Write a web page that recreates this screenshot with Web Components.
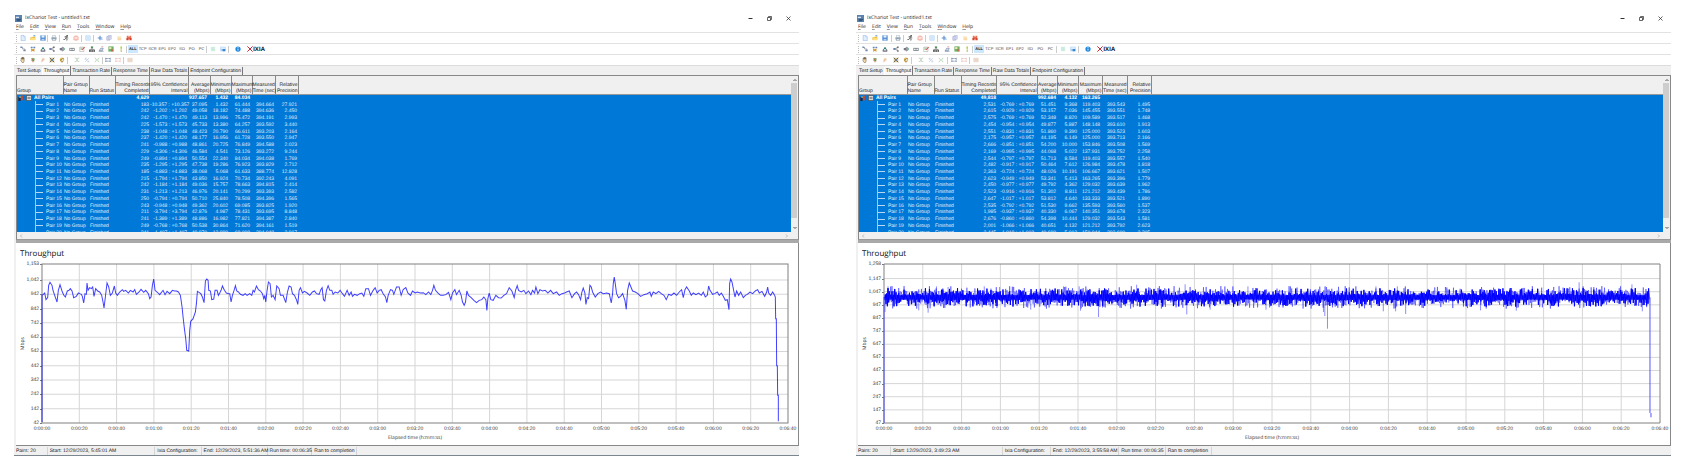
<!DOCTYPE html>
<html lang="en">
<head>
<meta charset="utf-8">
<title>IxChariot Test</title>
<style>
body {
    margin: 0;
    padding: 14px 17px 14px 14px;
    background: #fff;
    color: #333;
    font: 5px/6px "Liberation Sans", Arial, sans-serif;
    text-rendering: geometricPrecision;
    display: grid;
    grid-template-columns: 785fr 815fr;
    gap: 57px;
    align-items: start;
}
</style>
</head>
<body>
<chariot-window heading="IxChariot Test - untitled1.txt">
    <pair-table run="left"></pair-table>
    <throughput-chart run="left"></throughput-chart>
    <status-bar slot="status">
        <span>Pairs: 20</span>
        <span>Start: 12/29/2023, 5:45:01 AM</span>
        <span>Ixia Configuration:</span>
        <span>End: 12/29/2023, 5:51:36 AM</span>
        <span>Run time: 00:06:35</span>
        <span>Ran to completion</span>
    </status-bar>
</chariot-window>
<chariot-window heading="IxChariot Test - untitled1.txt">
    <pair-table run="right"></pair-table>
    <throughput-chart run="right"></throughput-chart>
    <status-bar slot="status">
        <span>Pairs: 20</span>
        <span>Start: 12/29/2023, 3:49:23 AM</span>
        <span>Ixia Configuration:</span>
        <span>End: 12/29/2023, 3:55:58 AM</span>
        <span>Run time: 00:06:35</span>
        <span>Ran to completion</span>
    </status-bar>
</chariot-window>

<script>
"use strict";

// icons on a 16x16 grid
const ICONS = {
    app: '<rect width="16" height="16" fill="#5b83ad"/><path d="M2 4h7v3H2z" fill="#dbe8f5"/><path d="M4 10h10M4 13h8" stroke="#26476b" stroke-width="2"/>',
    page: '<path d="M3 1h7l4 4v10H3z" fill="#e2efff" stroke="#8fb5e3" stroke-width="1.5"/><path d="M10 1v4h4" fill="none" stroke="#8fb5e3"/>',
    open: '<path d="M1 6h5l2-2h6v9H1z" fill="#f0c24a"/><path d="M1 14l3-6h12l-3 6z" fill="#ffdf7e"/><path d="M9 1l4 0 0 3" stroke="#4a8be0" stroke-width="2" fill="none"/>',
    save: '<path d="M1 1h14v14H1z" fill="#4286d6"/><path d="M4 1h8v6H4z" fill="#e9f2fc"/><path d="M4 10h8v5H4z" fill="#b7cfe9"/>',
    print: '<path d="M4 1h8v5H4z" fill="#fff" stroke="#7c93a8"/><path d="M1 6h14v6H1z" fill="#9aabba"/><path d="M4 10h8v5H4z" fill="#eef3f7" stroke="#5c7286"/>',
    run: '<circle cx="11" cy="2.500" r="2.200" fill="#333"/><path d="M4 5l5-1-2 5 4 2-1 4M7 9l-2 3H1M9 5l2 3h3" fill="none" stroke="#333" stroke-width="1.800"/>',
    stop: '<path d="M5 1h6l4 4v6l-4 4H5l-4-4V5z" fill="#f8b9ae"/><path d="M4 8h8" stroke="#fff" stroke-width="3"/>',
    poll: '<path d="M2 2h12v12H2z" fill="#e4f1fc" stroke="#a5cdf0" stroke-width="1.500"/><path d="M5 6h6M5 10h6" stroke="#a5cdf0"/>',
    add: '<path d="M8 2v12M2 8h12" stroke="#5a8fd0" stroke-width="3"/><path d="M10 11l3 3 3-3" fill="#7eaee8"/>',
    copy: '<path d="M2 4h8v10H2z" fill="#dcdff5" stroke="#7780bd"/><path d="M6 1h8v10H6z" fill="#eceefb" stroke="#7780bd"/><path d="M8 4h4M8 7h4" stroke="#7780bd"/>',
    paste: '<path d="M3 3h10v11H3z" fill="#fdebc7"/><path d="M5 7h9v7H5z" fill="#fbd8a8"/>',
    remove: '<path d="M2 2h5v6H2zM9 2h5v6H9z" fill="#e9744f"/><path d="M1 8h6v6H1zM9 8h6v6H9z" fill="#d9402f"/><path d="M5 6h6v4H5z" fill="#e2593f"/>',
    pair: '<path d="M3 4h4v4h6v5" fill="none" stroke="#667" stroke-width="1.500"/><path d="M1 1h5v4H1zM9 10h6v4H9z" fill="#6f8cb3"/>',
    multi: '<path d="M2 2h5v4H2zM9 2h5v4H9z" fill="#6688bb"/><path d="M3 8l9 6M12 8l-9 6" stroke="#cc9a35" stroke-width="3"/>',
    voip: '<path d="M3 13c0-9 10-9 10 0" fill="none" stroke="#3d4a55" stroke-width="2"/><circle cx="8" cy="6" r="3" fill="#2d8277"/><path d="M2 12h12v3H2z" fill="#556"/>',
    multicast: '<path d="M4 8l9-5M4 8h9M4 8l9 5" stroke="#555" stroke-width="1.300"/><circle cx="3" cy="8" r="2.500" fill="#5573a8"/><path d="M11 1h4v4h-4zM11 11h4v4h-4z" fill="#666"/>',
    speaker: '<path d="M2 5h4l4-4v14l-4-4H2z" fill="#778"/><path d="M12 3v10M15 5v6" stroke="#4f9e75" stroke-width="2"/>',
    video: '<path d="M1 5h14v8H1z" fill="#737b83"/><circle cx="5" cy="9" r="2.200" fill="#fff"/><circle cx="11" cy="9" r="2.200" fill="#fff"/>',
    edit: '<path d="M2 3h11v12H2z" fill="#fff" stroke="#777"/><path d="M4 6h6M4 9h4" stroke="#45a071" stroke-width="1.500"/><path d="M7 10l7-8 2 2-7 7z" fill="#d0553f"/>',
    group: '<path d="M8 5v4M2 13V9h12v4" fill="none" stroke="#444" stroke-width="1.500"/><path d="M5 1h6v5H5z" fill="#588d65"/><path d="M0 11h5v4H0zM6 11h5v4H6zM12 11h4v4h-4z" fill="#444"/>',
    chart: '<path d="M2 14h13M3 13l4-7h7l-3 7z" fill="#d8dde8" stroke="#667aa0" stroke-width="1.500"/><path d="M9 2h5" stroke="#d88" stroke-width="2"/>',
    image: '<path d="M1 1h14v14H1z" fill="#71b06b"/><path d="M3 3h6v5H3z" fill="#f4e8b0"/><path d="M8 9h6v5H8z" fill="#d9634c"/>',
    warn: '<path d="M6 1h5l-1 9H7z" fill="#bad04f"/><circle cx="8.500" cy="13" r="2" fill="#93a92f"/>',
    ruler: '<path d="M2 2h12v12H2z" fill="#d8f1e8"/><path d="M4 5h8M4 8h8M4 11h8" stroke="#a5ddca"/>',
    panes: '<path d="M1 2h14v12H1z" fill="#a7cff4"/><path d="M3 4h10v3H3z" fill="#fff"/><path d="M7 8h7v6H7z" fill="#3886d0"/>',
    info: '<circle cx="8" cy="8" r="7" fill="#2089df"/><path d="M8 7v5M8 3v2.500" stroke="#fff" stroke-width="2.200"/>',
    hand: '<path d="M3 7V3h2v3V1h2v5V1h2v5l0-4h2v9l-2 4H6L2 9z" fill="#f6d9a7" stroke="#574a36" stroke-width="1.200"/>',
    flag: '<path d="M3 8l4-6 6 2-2 7H5z" fill="#7fae6d"/><path d="M4 3l7 8M8 14v-4" stroke="#d04e3c" stroke-width="2"/>',
    pale: '<path d="M3 8l4-6 6 2-2 7H5z" fill="#f7dcb5"/><path d="M4 14l5-9" stroke="#dfa6a0" stroke-width="2"/>',
    cross: '<path d="M2 2h12v12H2z" fill="#dbc98f"/><path d="M2 2l12 12M14 2L2 14" stroke="#444" stroke-width="2"/><path d="M5 6h6v4H5z" fill="#6d86b3"/>',
    gear: '<circle cx="8" cy="7" r="6" fill="#e8b94d"/><path d="M3 9l9-5M8 15v-5" stroke="#665" stroke-width="2"/><circle cx="9" cy="8" r="2" fill="#fff"/>',
    gridA: '<path d="M2 3h4l4 9h4M14 3h-4L6 12H2" fill="none" stroke="#b3c8b2" stroke-width="2"/>',
    gridB: '<path d="M2 2h5v5H2zM9 9h5v5H9z" fill="#ccd9ea"/><path d="M3 13l10-10" stroke="#b9c6d8" stroke-width="2"/>',
    gridC: '<path d="M2 3l12 10M14 3L2 13" stroke="#a9d0ab" stroke-width="2.500"/><path d="M6 5h4v6H6z" fill="#d8ead8"/>',
    range: '<path d="M2 2v12M14 2v12M2 4h12M2 11h12" fill="none" stroke="#56749d" stroke-width="2" stroke-dasharray="3 1"/>',
    rangeB: '<path d="M2 2v12M14 2v12M2 4h12M2 11h12" fill="none" stroke="#e5b3ad" stroke-width="2" stroke-dasharray="3 1"/>',
    box: '<path d="M2 3h12v10H2z" fill="#f1dfd0" stroke="#ddc0b0"/><path d="M4 8h8" stroke="#cdb5ad"/>',
};

const icon = name => `<svg viewBox="0 0 16 16" aria-hidden="true">${ICONS[name]}</svg>`;

// one string per toolbar: | separator, = wide separator, "quoted" text button
const TOOLBARS = [
    'page open save | print | run stop | poll | add copy paste remove',
    'pair multi voip multicast speaker video edit group chart image warn | "ALL" "TCP" "SCR" "EP1" "EP2" "SO" "PO" "PC" | ruler panes = info',
    'hand flag pale cross gear = gridA gridB gridC | range rangeB | box',
];

// rows: records, confidence, average, minimum, maximum, time, precision
const RUNS = {
    left: {
        columns: [[46, 0], [26, 0], [26, 0], [34, 0], [39, 1], [22, 3], [21, 3], [21, 2], [23, 1], [23, 1]],
        total: ['4,629', '', '937.657', '1.432', '84.034', '', ''],
        rows: `183 10.357 37.095 1.432 61.444 394.664 27.921
242 1.202 49.058 18.182 74.488 394.636 2.450
242 1.470 49.113 13.996 75.472 394.191 2.993
225 1.573 45.733 13.380 64.257 393.592 3.440
238 1.048 48.423 20.790 66.611 393.203 2.164
237 1.420 48.177 16.956 61.728 393.550 2.947
241 0.988 48.861 20.725 76.849 394.588 2.023
229 4.306 46.584 4.541 73.126 393.272 9.244
249 0.894 50.554 22.340 84.034 394.038 1.769
235 1.295 47.738 19.286 76.923 393.829 2.712
185 4.883 38.068 5.068 61.633 388.774 12.828
215 1.794 43.850 16.924 70.734 392.243 4.091
242 1.184 49.036 15.757 78.663 394.815 2.414
231 1.213 46.976 20.141 70.299 393.393 2.582
250 0.794 50.710 25.840 78.508 394.396 1.565
243 0.948 49.362 20.602 69.085 393.825 1.920
211 3.794 42.876 4.987 78.431 393.695 8.848
241 1.389 48.886 16.982 77.821 394.387 2.840
249 0.768 50.538 30.864 71.620 394.161 1.519
241 1.407 48.870 13.889 68.098 394.048 2.917`,
        max: 1153, min: 42, width: 2237
    },
    right: {
        columns: [[48, 0], [27, 0], [27, 0], [35, 0], [41, 3], [20, 1], [21, 1], [24, 2], [25, 2], [24, 1]],
        total: ['49,818', '', '992.684', '4.132', '163.265', '', ''],
        rows: `2,531 0.769 51.451 9.368 119.403 393.543 1.495
2,615 0.929 53.157 7.036 145.455 393.551 1.748
2,575 0.769 52.348 8.820 109.589 393.517 1.468
2,454 0.954 49.877 5.887 148.148 393.610 1.913
2,551 0.831 51.860 9.390 125.000 393.523 1.603
2,175 0.957 44.195 6.149 125.000 393.713 2.166
2,666 0.851 54.200 10.000 153.846 393.508 1.569
2,169 0.995 44.068 5.022 137.931 393.752 2.258
2,544 0.797 51.713 8.584 119.403 393.557 1.540
2,482 0.917 50.464 7.612 126.984 393.478 1.818
2,363 0.724 48.026 10.191 106.667 393.621 1.507
2,623 0.949 53.341 5.413 163.265 393.396 1.779
2,450 0.977 49.792 4.362 129.032 393.639 1.962
2,523 0.916 51.302 8.811 121.212 393.439 1.786
2,647 1.017 53.812 4.640 133.333 393.521 1.890
2,535 0.792 51.530 9.662 135.593 393.560 1.537
1,985 0.937 40.330 6.067 140.351 393.678 2.323
2,676 0.860 54.398 10.444 129.032 393.543 1.581
2,001 1.066 40.651 4.132 121.212 393.792 2.623
2,445 1.018 49.699 5.012 150.944 393.600 2.205`,
        max: 1258, min: 47, width: 2322
    }
};

// throughput samples of the left run, x,y in plot units with y counted down
const SAMPLES = `0,474 0,94 4,91 8,87 12,107 17,101 20,64 24,55 30,64 33,79 39,97 45,114 49,79 54,62 60,81 65,93 70,99 76,81 81,79 85,74 90,81 95,101 103,97 109,87 113,89 118,91 121,97 125,117 129,89 133,91 135,57 138,79 143,71 148,74 152,69 156,97 161,74 167,81 173,84 179,94 183,114 186,132 190,99 195,57 200,69 205,94 211,87 217,66 221,87 226,94 233,84 241,77 245,82 251,79 259,87 265,79 273,84 278,77 283,91 291,84 297,76 305,85 311,79 319,89 323,104 327,99 331,64 335,45 339,79 345,84 353,92 359,84 363,79 369,92 375,82 383,89 391,79 397,81 403,81 409,84 415,94 420,129 423,159 427,194 431,224 434,259 440,261 443,199 446,172 453,164 460,144 463,119 466,82 471,85 476,89 481,99 486,116 490,51 494,45 498,49 500,79 505,81 509,107 515,105 519,79 525,79 529,94 533,87 537,79 541,66 547,79 553,87 559,89 563,89 567,114 571,94 576,79 580,65 584,81 589,84 595,91 603,94 609,89 615,94 623,89 629,94 633,79 637,84 643,66 649,77 655,81 661,89 665,104 668,94 671,114 675,79 679,54 684,59 688,99 693,94 699,107 704,66 711,74 715,94 723,94 731,116 736,84 741,66 747,69 751,89 757,94 763,107 767,121 771,79 775,71 781,87 787,82 795,87 803,94 811,84 817,81 823,89 831,91 836,77 840,71 844,107 848,111 853,79 858,65 863,79 869,79 873,91 879,84 887,87 894,79 901,89 907,97 915,79 921,94 927,84 931,97 937,91 945,94 953,89 959,87 965,97 971,74 979,74 985,94 993,79 999,71 1005,87 1011,79 1017,77 1023,89 1030,99 1034,116 1038,94 1045,77 1051,79 1055,91 1063,69 1071,69 1077,94 1083,77 1091,71 1097,87 1105,94 1111,81 1119,87 1125,84 1135,87 1143,86 1151,92 1159,84 1166,92 1171,79 1175,64 1180,79 1186,86 1195,94 1203,94 1211,92 1219,85 1226,107 1231,87 1238,77 1243,92 1251,79 1257,94 1261,114 1266,124 1270,114 1274,81 1279,94 1287,101 1295,109 1303,116 1311,109 1319,107 1325,99 1331,107 1334,139 1337,104 1341,87 1346,107 1353,109 1361,94 1369,101 1377,102 1385,94 1393,89 1401,71 1409,81 1416,101 1420,79 1425,65 1429,79 1437,84 1445,79 1451,89 1459,81 1466,92 1471,79 1477,87 1481,69 1487,89 1493,77 1501,81 1509,79 1517,87 1525,79 1533,89 1543,84 1551,94 1559,89 1567,87 1573,84 1581,81 1589,101 1597,89 1603,84 1609,92 1615,107 1619,84 1623,72 1628,87 1631,121 1635,101 1639,104 1643,64 1647,69 1651,84 1659,99 1667,89 1675,84 1683,89 1693,87 1701,89 1707,117 1711,89 1713,59 1716,39 1719,59 1723,89 1729,101 1735,97 1741,89 1748,109 1752,136 1756,79 1761,57 1766,69 1771,81 1779,84 1787,89 1795,97 1805,92 1815,89 1823,84 1827,97 1833,84 1841,89 1849,82 1857,89 1865,94 1872,107 1879,91 1887,94 1895,87 1903,94 1911,84 1918,77 1923,101 1928,77 1933,69 1941,81 1947,94 1953,87 1961,92 1969,87 1977,94 1983,84 1989,99 1995,94 1999,66 2003,79 2011,91 2017,89 2025,84 2031,94 2037,87 2043,97 2049,109 2055,107 2060,137 2062,59 2065,45 2069,54 2073,74 2078,99 2083,81 2089,94 2095,84 2103,101 2109,94 2115,91 2123,84 2131,89 2139,81 2146,77 2151,87 2159,82 2167,97 2173,84 2176,69 2179,87 2185,94 2191,84 2196,92 2199,99 2200,164 2202,164 2203,305 2205,305 2206,394 2208,394 2208,472`;

// tallest excursions of the right run: x, y in the same units
const SPIKES = [[3, 144], [12, 67], [104, 139], [132, 146], [157, 67], [192, 69], [300, 67], [346, 69], [439, 137], [537, 67], [584, 67], [588, 140],
    [642, 159], [756, 62], [901, 61], [906, 151], [976, 137], [1089, 67], [1143, 137], [1315, 144], [1319, 156], [1327, 194], [1472, 67], [1494, 142],
    [1531, 142], [1536, 67], [1561, 150], [1785, 139], [1892, 140], [2080, 55], [2238, 61], [2269, 142]];

function bandPath(lift, spread, seed)
{
    let random = () => (seed = seed*16807 % 2147483647) / 2147483647;
    let d = 'M1 100';
    for (let i = 2; i < 2292; i += 2)
    {
        let side = i%4 ? 1 : -1;
        d += `L${i} ${(100 + side*(lift + spread*random()**2)).toFixed(1)}`;
    }
    return d;
}

function make(name, css, build)
{
    customElements.define(name, class extends HTMLElement {
        connectedCallback() {
            if (this.shadowRoot) return;
            const template = document.createElement('template');
            template.innerHTML = `<style>* { box-sizing: border-box; } ${css}</style>${build(this)}`;
            this.attachShadow({ mode: 'open' }).appendChild(template.content.cloneNode(true));
        }
    });
}

make('menu-bar', `
    :host { display: block; font-family: "Open Sans", sans-serif; color: #222; }
    nav { display: flex; gap: 6px; height: 10px; padding: 0 2px; align-items: center; }
    button { border: 0; padding: 0; background: none; font: inherit; color: inherit; text-rendering: inherit; }
    u { text-underline-offset: 1px; text-decoration-thickness: 1px; text-decoration-color: #999; }
`, () => `<nav>${['File', 'Edit', 'View', 'Run', 'Tools', 'Window', 'Help'].map(s =>
    `<button><u>${s[0]}</u>${s.slice(1)}</button>`).join('')}</nav>`);

make('tool-bar', `
    :host { display: block; background: #fff; border-top: 1px solid #e2e2e2; }
    div { display: flex; align-items: center; height: 10px; }
    button { flex: none; width: 1.25%; height: 8px; padding: 0; border: 0; background: none; display: flex; align-items: center; justify-content: center;
        font: 4px/8px "Liberation Sans", sans-serif; color: #444; text-rendering: inherit; }
    button.on { background: #cce8ff; color: #222; font-weight: bold; }
    svg { width: 6px; height: 6px; flex: none; }
    i { flex: none; width: 2px; height: 7px; border-left: 1px solid #ccc; }
    i.wide { width: 5px; }
    i.grip { width: 2px; margin-left: 2px; border-left: 1px dotted #bbb; }
    .logo { gap: 0; height: 8px; margin-left: 4px; font: bold 6px/8px "Open Sans", sans-serif; color: #222; }
`, el => {
    const row = +el.getAttribute('row');
    const items = TOOLBARS[row].split(' ').map(s =>
        s == '|' ? '<i></i>' :
        s == '=' ? '<i class="wide"></i>' :
        s[0] == '"' ? `<button${s == '"ALL"' ? ' class="on"' : ''}>${s.slice(1, -1)}</button>` :
        `<button aria-label="${s}">${icon(s)}</button>`);
    const logo = row == 1 ? `<div class="logo"><svg viewBox="0 0 16 16" aria-hidden="true"><path d="M1 1l14 14M15 1L1 15" stroke="#c8202e" stroke-width="2.500"/></svg>IXIA</div>` : '';
    return `<div role="toolbar"><i class="grip"></i>${items.join('')}${logo}</div>`;
});

make('tab-strip', `
    :host { display: block; background: #f0f0f0; border-top: 1px solid #dcdcdc; color: #222; }
    div { display: flex; height: 9px; align-items: flex-end; }
    button { height: 8px; padding: 0 1px; border: 0; border-right: 1px solid #777; background: none; font: inherit; line-height: 8px; color: inherit; text-rendering: inherit; }
    button:first-child { border-color: #fff; padding-left: 3px; }
    button.on { height: 9px; background: #f8f8f8; }
`, () => `<div role="tablist">${['Test Setup', 'Throughput', 'Transaction Rate', 'Response Time', 'Raw Data Totals', 'Endpoint Configuration'].map((s, i) =>
    `<button role="tab"${i == 1 ? ' class="on" aria-selected="true"' : ''}>${s}</button>`).join('')}</div>`);

make('pair-table', `
    :host { display: block; border: 1px solid #888; border-bottom-color: #999; background: #f0f0f0; }
    .view { display: grid; grid-template-columns: 1fr 7px; }
    .rows { height: 156px; overflow: hidden; background: #0078d7; }
    table { width: 100%; height: 160px; table-layout: fixed; border-collapse: collapse; color: #e4f1fc; }
    th, td { padding: 0 1px; overflow: visible; white-space: nowrap; text-align: left; font-weight: inherit; }
    thead tr { height: 18px; }
    thead th { padding: 0; background: #f0f0f0; color: #222; vertical-align: bottom; border-right: 1px solid #888; border-bottom: 1px solid #999; }
    thead th:last-child { border-right: 0; }
    .n { text-align: right; }
    .total { font-weight: bold; color: #fff; }
    .name { padding-left: 29px; background: linear-gradient(#9fcbf0 0 0) 18px 0/1px 100% no-repeat, linear-gradient(#b5d7f4 0 0) 18px 50%/8px 1px no-repeat; }
    .all { display: flex; align-items: center; gap: 2px; }
    .all svg { width: 6px; height: 6px; }
    .bar { display: flex; flex-direction: column; justify-content: space-between; align-items: center; padding: 2px 0; }
    .bar.down { background: linear-gradient(#cdcdcd 0 0) 0 7px/6px 135px no-repeat; }
    .bar.side { flex-direction: row; height: 7px; padding: 0 9px 0 2px; }
    .bar svg { width: 4px; height: 4px; fill: none; stroke: #555; stroke-width: 2; }
    .bar.side svg { stroke: #bbb; }
`, el => {
    const run = RUNS[el.getAttribute('run')];
    const heads = ['Group', 'Pair Group<br>Name', 'Run Status', 'Timing Records<br>Completed', '95% Confidence<br>Interval',
        'Average<br>(Mbps)', 'Minimum<br>(Mbps)', 'Maximum<br>(Mbps)', 'Measured<br>Time (sec)', 'Relative<br>Precision'];
    const cells = list => list.map((s, i) => `<td class="n" style="padding-right:${run.columns[i + 3][1]}px">${s}</td>`).join('') + '<td></td>';
    const rows = run.rows.split('\n').map((line, i) => {
        let v = line.split(' ');
        v[1] = `-${v[1]} : +${v[1]}`;
        return `<tr><td class="name">Pair ${i + 1}</td><td>No Group</td><td>Finished</td>${cells(v)}</tr>`;
    });
    return `
    <div class="view">
        <div class="rows"><table>
            <colgroup>${run.columns.map(c => `<col style="width:${c[0]}px">`).join('')}<col></colgroup>
            <thead><tr>${heads.map((s, i) => `<th${i > 2 ? ' class="n"' : ''}>${s}</th>`).join('')}<th></th></tr></thead>
            <tbody>
                <tr class="total"><td><div class="all">
                    <svg viewBox="0 0 16 16" aria-hidden="true"><path d="M1 6h6v10H1z" fill="#331d24"/><path d="M8 1h5v13H8z" fill="#c84636"/><path d="M4 3h3v5H4z" fill="#e7b55b"/></svg>
                    <svg viewBox="0 0 16 16" aria-hidden="true"><path d="M1 1h14v14H1z" fill="#d8d8d8" stroke="#444" stroke-width="2"/><path d="M4 8h8" stroke="#222" stroke-width="2"/></svg>
                    <span>All Pairs</span></div></td><td></td><td></td>${cells(run.total)}</tr>
                ${rows.join('')}
            </tbody>
        </table></div>
        <div class="bar down"><svg viewBox="0 0 8 8"><path d="M1 6l3-3 3 3"/></svg><svg viewBox="0 0 8 8"><path d="M1 2l3 3 3-3"/></svg></div>
    </div>
    <div class="bar side"><svg viewBox="0 0 8 8"><path d="M6 1L3 4l3 3"/></svg><svg viewBox="0 0 8 8"><path d="M2 1l3 3-3 3"/></svg></div>`;
});

make('throughput-chart', `
    :host { display: block; background: #fff; border: 1px solid #888; border-width: 0 1px 1px 0; padding: 5px 10px 3px 4px; color: #333; }
    h2 { margin: 0 0 4px; font: 8px/12px "Open Sans", sans-serif; color: #111; }
    .plot { display: grid; grid-template-columns: 5px 15px 2px 1fr; grid-template-rows: 159px 10px 9px; }
    .unit { writing-mode: vertical-rl; transform: rotate(180deg); justify-self: center; align-self: center; font-family: "Open Sans", sans-serif; }
    .y { display: grid; text-align: right; padding-right: 1px; }
    .y span { height: 0; line-height: 0; }
    .ticks { display: grid; }
    .ticks span { height: 1px; background: #777; }
    .x { grid-column: 4; display: flex; justify-content: space-between; padding-top: 3px; }
    .x span { width: 0; display: flex; justify-content: center; white-space: nowrap; }
    .time { grid-column: 4; text-align: center; line-height: 10px; font-family: "Open Sans", sans-serif; }
    svg { display: block; width: 100%; height: 159px; overflow: visible; }
    path { fill: none; vector-effect: non-scaling-stroke; }
`, el => {
    const name = el.getAttribute('run');
    const run = RUNS[name];
    const left = name == 'left';
    const W = run.width, H = 477;
    const range = run.max - run.min;

    // grid lines
    let grid = '';
    let labels = [run.max];
    for (let v = run.min + Math.floor((range - 50)/100)*100; v >= run.min; v -= 100)
    {
        labels.push(v);
        if (v > run.min)
            grid += `M0 ${(H - (v - run.min)/range*H).toFixed(1)}H${W}`;
    }
    for (let i = 1; i < 20; ++i)
        grid += `M${W*i/20} 0V${H}`;
    const tracks = `${labels[0] - labels[1]}fr repeat(${labels.length - 2}, 100fr) 0`;

    // curve
    let curve;
    if (left)
        curve = `<path d="M${SAMPLES.split(' ').join('L')}" stroke="#00f" stroke-opacity=".75"/>`;
    else
        curve = `<path d="${bandPath(7, 27, 77)}" stroke="#00f" stroke-opacity=".4"/>
            <path d="${SPIKES.map(([x, y]) => `M${x} 100V${y}`).join('')}" stroke="#00f" stroke-opacity=".45"/>
            <path d="${bandPath(6, 22, 991)}" stroke="#00f"/>
            <path d="M0 ${H}V100M2292 100V447M2295 447V460" stroke="#55f"/>`;

    const times = [];
    for (let s = 0; s <= 400; s += 20)
        times.push(`0:0${Math.floor(s/60)}:${String(s%60).padStart(2, '0')}`);

    return `
    <h2>Throughput</h2>
    <div class="plot">
        <div class="unit">Mbps</div>
        <div class="y" style="grid-template-rows:${tracks}">${labels.map(v => `<span>${v.toLocaleString('en-US')}</span>`).join('')}</div>
        <div class="ticks" style="grid-template-rows:${tracks}">${labels.map(() => '<span></span>').join('')}</div>
        <svg viewBox="0 0 ${W} ${H}" preserveAspectRatio="none" role="img" aria-label="Throughput over time">
            <path d="${grid}" stroke="#d6d6d6"/>
            <path d="M0 0H${W}V${H}H0z" stroke="#808080"/>
            ${curve}
        </svg>
        <div class="x">${times.map(s => `<span>${s}</span>`).join('')}</div>
        <div class="time">Elapsed time (h:mm:ss)</div>
    </div>`;
});

make('status-bar', `
    :host { display: grid; grid-template-columns: 4.3% 13.7% 5.9% 8.4% 5.7% 5.7%; height: 9px; align-items: center; background: #f0f0f0;
        border-bottom: 1px solid #7c868e; line-height: 8px; color: #222; white-space: nowrap; }
    ::slotted(span) { padding-left: 2px; border-right: 1px solid #d4d4d4; }
`, () => '<slot></slot>');

make('chariot-window', `
    :host { display: block; min-width: 0; background: #f0f0f0; }
    header { background: #fff; }
    .title { display: flex; align-items: center; height: 8px; padding: 0 1px; gap: 3px; font-family: "Open Sans", sans-serif; color: #222; }
    .title > svg { width: 7px; height: 7px; }
    .title span { flex: 1; }
    .title div { display: flex; }
    .title button { width: 19px; height: 8px; padding: 0; border: 0; background: none; display: flex; align-items: center; justify-content: center; }
    .title button svg { width: 5px; height: 5px; fill: none; stroke: #333; }
    main { padding-left: 2px; display: flex; flex-direction: column; }
    .work { display: flex; flex-direction: column; gap: 3px; background: #a9a9a9; }
`, el => `
    <header>
        <div class="title">${icon('app')}<span>${el.getAttribute('heading')}</span>
            <div>
                <button aria-label="Minimize"><svg viewBox="0 0 10 10"><path d="M1 5h8" stroke-width="2"/></svg></button>
                <button aria-label="Restore"><svg viewBox="0 0 10 10"><path d="M1 3h6v6H1zM3 3V1h6v6H7" stroke-width="1.500"/></svg></button>
                <button aria-label="Close"><svg viewBox="0 0 10 10"><path d="M1 1l8 8M9 1L1 9" stroke-width="1.500"/></svg></button>
            </div>
        </div>
        <menu-bar></menu-bar>
        <tool-bar row="0"></tool-bar>
        <tool-bar row="1"></tool-bar>
        <tool-bar row="2"></tool-bar>
    </header>
    <tab-strip></tab-strip>
    <main><div class="work"><slot></slot></div></main>
    <slot name="status"></slot>`);
</script>
</body>
</html>
